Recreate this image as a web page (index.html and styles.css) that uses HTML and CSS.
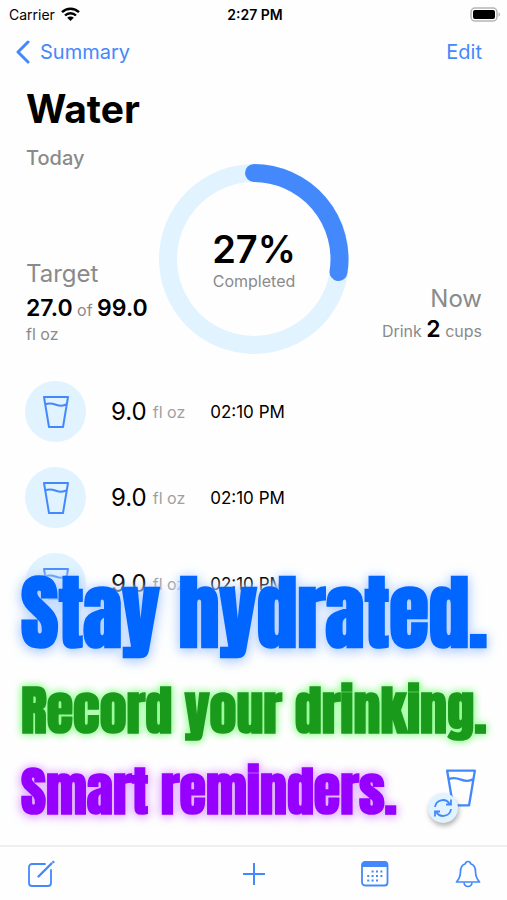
FILE: index.html
```html
<!DOCTYPE html>
<html lang="en">
<head>
    <meta charset="UTF-8">
    <meta name="viewport" content="width=device-width, initial-scale=1.0">
    <title>Water</title>
    <link rel="stylesheet" href="styles.css">
</head>
<body>
    <!-- shared glass icon -->
    <svg class="defs" width="0" height="0" aria-hidden="true">
        <symbol id="glass" viewBox="0 0 26 32">
            <path d="M1 1h24l-5 30H6z M2.4 8.4c4-2 7-1 10.600 .4s7 1.800 10.800-.6" fill="none" stroke="currentColor" stroke-width="2" stroke-linejoin="round"/>
        </symbol>
    </svg>

    <div class="screen">
        <div class="status">
            <div class="carrier">
                Carrier
                <svg width="19" height="14" viewBox="0 0 19 14" fill="none" stroke="#000" stroke-width="2.400">
                    <path d="M1 5.200a12.200 12.200 0 0 1 17 0M4 8.500a7.900 7.900 0 0 1 11 0"/>
                    <path d="M9.500 14L6.200 10.800a4.700 4.700 0 0 1 6.600 0z" fill="#000" stroke="none"/>
                </svg>
            </div>
            <div class="time">2:27 PM</div>
            <div class="battery">
                <svg width="31" height="15" viewBox="0 0 31 15">
                    <rect x="1" y="1" width="26" height="13" rx="4" fill="#fff" stroke="#b5b5b5" stroke-width="1.500"/>
                    <rect x="3" y="3" width="22" height="9" rx="2"/>
                    <path d="M28.500 5.500c2 .5 2 3.500 0 4z" fill="#b5b5b5"/>
                </svg>
            </div>
        </div>

        <nav class="nav">
            <a href="#" class="back">
                <svg width="14" height="24" viewBox="0 0 14 24" fill="none" stroke="currentColor" stroke-width="3" stroke-linecap="round" stroke-linejoin="round">
                    <path d="M12 2L2 12l10 10"/>
                </svg>
                Summary
            </a>
            <a href="#">Edit</a>
        </nav>

        <h1>Water</h1>

        <section class="summary">
            <div class="col">
                <div class="today">Today</div>
                <div class="target">
                    <div class="label">Target</div>
                    <div class="value"><b>27.0</b> of <b>99.0</b></div>
                    <div class="unit">fl oz</div>
                </div>
            </div>
            <div class="ring">
                <svg viewBox="0 0 190 190" fill="none" stroke-width="18">
                    <circle cx="95" cy="95" r="86" stroke="#e0f3ff"/>
                    <path d="M95 9A86 86 0 0 1 179.500 108" stroke="#4489fc" stroke-linecap="round"/>
                </svg>
                <div class="ring-text">
                    <div class="percent">27%</div>
                    <div class="completed">Completed</div>
                </div>
            </div>
            <div class="col now">
                <div class="label">Now</div>
                <div class="value">Drink <b>2</b> cups</div>
            </div>
        </section>

        <ul class="log">
            <li>
                <span class="cup"><svg width="26" height="32"><use href="#glass"/></svg></span>
                <span class="amount">9.0 <small>fl oz</small></span>
                <span class="at">02:10 PM</span>
            </li>
            <li>
                <span class="cup"><svg width="26" height="32"><use href="#glass"/></svg></span>
                <span class="amount">9.0 <small>fl oz</small></span>
                <span class="at">02:10 PM</span>
            </li>
            <li>
                <span class="cup"><svg width="26" height="32"><use href="#glass"/></svg></span>
                <span class="amount">9.0 <small>fl oz</small></span>
                <span class="at">02:10 PM</span>
            </li>
        </ul>

        <div class="promo">
            <p class="stay">Stay hydrated.</p>
            <p class="record">Record your drinking.</p>
            <div class="promo-row">
                <p class="smart">Smart reminders.</p>
                <button class="repeat" aria-label="Repeat last drink">
                    <svg class="glass" width="30" height="38"><use href="#glass"/></svg>
                    <span class="badge">
                        <svg width="20" height="20" viewBox="0 0 20 20" fill="none" stroke="currentColor" stroke-width="1.800">
                            <path d="M2 9a8 8 0 0 1 14.500-3.500M18 11a8 8 0 0 1-14.500 3.500M18 1.500v5h-5M2 18.500v-5h5"/>
                        </svg>
                    </span>
                </button>
            </div>
        </div>

        <div class="toolbar">
            <button aria-label="Write">
                <svg width="28" height="28" viewBox="0 0 28 28" fill="none" stroke="currentColor" stroke-width="1.800" stroke-linecap="round">
                    <path d="M18 4H5a3 3 0 0 0-3 3v16a3 3 0 0 0 3 3h16a3 3 0 0 0 3-3V10"/>
                    <path d="M11.500 16.500L24.500 3.500" stroke-width="2.400"/>
                    <path d="M26.200 1.800l.4.400" stroke-width="2"/>
                </svg>
            </button>
            <button class="add" aria-label="Add">
                <svg width="22" height="22" viewBox="0 0 22 22" fill="none" stroke="currentColor" stroke-width="2">
                    <path d="M11 0v22M0 11h22"/>
                </svg>
            </button>
            <div class="right">
                <button aria-label="Calendar">
                    <svg width="28" height="26" viewBox="0 0 28 26" fill="none" stroke="currentColor">
                        <rect x="1" y="1" width="25.500" height="23.500" rx="3" stroke-width="1.800"/>
                        <path d="M1 5.500V4a3 3 0 0 1 3-3h19.500a3 3 0 0 1 3 3v1.500z" fill="currentColor"/>
                        <path d="M10.600 10.500h11M6.200 15h15.500M6.200 19.500h11" stroke-width="2" stroke-dasharray="2 2.400"/>
                    </svg>
                </button>
                <button aria-label="Reminders">
                    <svg width="26" height="28" viewBox="0 0 26 28" fill="none" stroke="currentColor" stroke-width="1.700" stroke-linejoin="round">
                        <path d="M13 1.500c-1.500 0-2.500 1-2.700 2.300C7 5 5.500 8 5.500 11.500c0 5-.8 7-4 10.500h23c-3.200-3.500-4-5.500-4-10.500 0-3.500-1.500-6.500-4.800-7.700C15.500 2.500 14.500 1.500 13 1.500z"/>
                        <path d="M9 22.500c.3 2.800 2 4 4 4s3.700-1.200 4-4"/>
                    </svg>
                </button>
            </div>
        </div>
    </div>
</body>
</html>
```
FILE: styles.css
```css
* {
    box-sizing: border-box;
}

body {
    margin: 0;
    background-color: #fefefe;
    color: #000;
    font-family: Inter, "Liberation Sans", sans-serif;
}

a {
    color: #4489fc;
    text-decoration: none;
}

button {
    padding: 0;
    border: 0;
    background: none;
    color: #4489fc;
}

svg {
    display: block;
}

.defs {
    position: absolute;
}

.screen {
    position: relative;
    display: flex;
    flex-direction: column;
    min-height: 100vh;
}

/* status bar */
.status {
    display: grid;
    grid-template-columns: 1fr auto 1fr;
    align-items: center;
    height: 28px;
    padding: 0 6px 0 9px;
    font-size: 14px;
}

.carrier {
    display: flex;
    align-items: center;
    gap: 6px;
}

.time {
    font-weight: 600;
}

.battery {
    justify-self: end;
}

.nav {
    display: flex;
    justify-content: space-between;
    align-items: center;
    height: 48px;
    padding: 0 25px 0 16px;
    font-size: 20px;
}

.back {
    display: flex;
    align-items: center;
    gap: 10px;
}

h1 {
    margin: 8px 26px 0;
    font-size: 39px;
    line-height: 50px;
}

/* target, ring, next drink */
.summary {
    display: grid;
    grid-template-columns: 1fr 190px 1fr;
    align-items: end;
    padding: 12px 25px 0 26px;
    color: #8a8a8a;
}

.col {
    display: flex;
    flex-direction: column;
    justify-content: space-between;
    height: 100%;
    padding-bottom: 12px;
}

.today {
    font-size: 20px;
    font-weight: 500;
    line-height: 24px;
}

.label {
    font-size: 24px;
    line-height: 36px;
}

.value {
    font-size: 16px;
    line-height: 32px;
    white-space: nowrap;
}

.value b {
    color: #000;
    font-size: 23px;
    font-weight: 600;
}

.unit {
    font-size: 16px;
    line-height: 16px;
}

.now {
    justify-content: flex-end;
    padding-bottom: 7px;
    text-align: right;
}

.now .label {
    line-height: 28px;
}

.ring {
    display: grid;
    place-items: center;
    margin-top: 18px;
}

.ring > * {
    grid-area: 1 / 1;
}

.ring svg {
    width: 100%;
}

.ring-text {
    text-align: center;
}

.percent {
    color: #000;
    font-size: 38px;
    font-weight: 600;
    line-height: 44px;
}

.completed {
    font-size: 16px;
    line-height: 20px;
}

/* drink log */
.log {
    display: flex;
    flex-direction: column;
    gap: 25px;
    margin: 0;
    padding: 27px 25px 0;
    list-style: none;
}

.log li {
    display: flex;
    align-items: center;
    gap: 25px;
}

.cup {
    display: grid;
    place-items: center;
    width: 61px;
    height: 61px;
    border-radius: 50%;
    background-color: #e0f3ff;
    color: #4489fc;
}

.amount {
    display: flex;
    align-items: center;
    gap: 6px;
    font-size: 24px;
}

.amount small {
    color: #a0a0a0;
    font-size: 16px;
}

.at {
    font-size: 17px;
}

/* slogans over the end of the log */
.promo {
    position: absolute;
    right: 25px;
    bottom: 69px;
    left: 21px;
    font-family: Impact, Anton, "Roboto Condensed", "Liberation Sans", sans-serif;
    font-weight: bold;
    white-space: nowrap;
}

.promo p {
    margin: 0;
}

.promo .stay {
    color: #06f;
    font-size: 81px;
    line-height: 112px;
    text-shadow: 0 2px 10px #b4d0ff, 0 2px 16px #c8dcff;
}

.promo .record {
    color: #1a9a1a;
    font-size: 54px;
    line-height: 82px;
    text-shadow: 0 0 8px #8dff8d, 0 0 8px #adffad;
}

.promo .smart {
    color: #9500ff;
    font-size: 54px;
    line-height: 80px;
    text-shadow: 0 0 8px #e2b0ff, 0 2px 12px #e2b0ff;
}

.promo-row {
    display: flex;
    justify-content: space-between;
    align-items: flex-end;
}

.repeat {
    position: relative;
    width: 54px;
    height: 54px;
    margin-bottom: 8px;
}

.repeat .glass {
    margin: 0 6px 16px auto;
}

.badge {
    position: absolute;
    bottom: 0;
    left: 0;
    display: grid;
    place-items: center;
    width: 30px;
    height: 30px;
    border-radius: 50%;
    background-color: #e0f3ff;
    box-shadow: 1px 3px 5px rgba(0, 0, 0, 0.3);
}

/* bottom bar */
.toolbar {
    display: grid;
    grid-template-columns: 1fr auto 1fr;
    align-items: center;
    height: 55px;
    margin-top: auto;
    padding: 0 26px 0 27px;
    border-top: 2px solid #efefef;
}

.right {
    display: flex;
    justify-content: flex-end;
    gap: 66px;
}
```
